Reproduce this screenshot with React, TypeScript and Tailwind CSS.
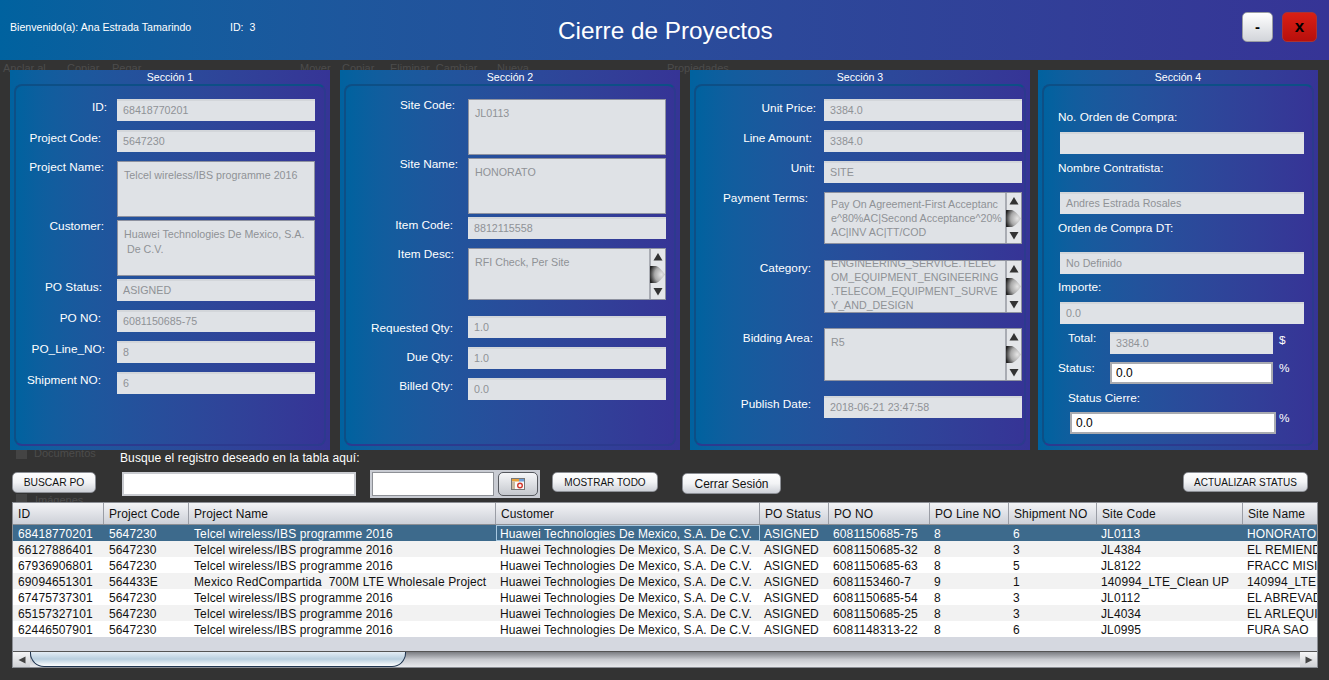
import React from "react";

const grad = "bg-gradient-to-r from-[#00629f] to-[#363496]";

function Spin() {
  return (
    <div className="w-[16px] shrink-0 self-stretch bg-[#e4e6e9] border-l-2 border-[#a9acb3] flex flex-col items-center justify-between py-[3px]">
      <svg className="shrink-0" width="10" height="9" viewBox="0 0 10 9"><path d="M5 1L9.5 8.5H0.5Z" fill="#333" /></svg>
      <svg className="shrink-0 -ml-[1px]" width="15" height="17" viewBox="0 0 15 17">
        <defs>
          <radialGradient id="bulb" cx="0.75" cy="0.5" r="0.8">
            <stop offset="0" stopColor="#e6e6e6" />
            <stop offset="0.55" stopColor="#a8a8a8" />
            <stop offset="1" stopColor="#222" />
          </radialGradient>
        </defs>
        <path d="M0 0H6C9 1 12 4 15 8.5C12 13 9 16 6 17H0Z" fill="url(#bulb)" />
      </svg>
      <svg className="shrink-0" width="10" height="9" viewBox="0 0 10 9"><path d="M5 8.5L9.5 1H0.5Z" fill="#333" /></svg>
    </div>
  );
}

function Box({ v, h = "h-[22px]", w = "w-[198px]", area = false, spin = false, white = false, textCls = "" }: { v?: string; h?: string; w?: string; area?: boolean; spin?: boolean; white?: boolean; textCls?: string }) {
  if (area) {
    return (
      <div className={`${h} ${w} shrink-0 flex overflow-hidden bg-[#dfe2e6] border border-[#8e92a0] text-[#8f9296] text-[10.7px] leading-[15px]`}>
        <div className={`flex-1 min-w-0 whitespace-pre overflow-hidden ${textCls || "pl-[6px] pt-[6px]"}`}>{v}</div>
        {spin && <Spin />}
      </div>
    );
  }
  return (
    <div className={`${h} ${w} shrink-0 flex items-center ${white ? "pl-[4px] bg-white border-2 border-[#a9abb0] text-black text-[12px]" : "pl-[6px] pb-[2px] bg-[#dfe2e6] border-t-2 border-[#d3d6da] text-[#8f9296] text-[10.7px]"}`}>
      {v}
    </div>
  );
}

function Row({ label, pos, cls, children }: { label: string; pos: string; cls: string; children: React.ReactNode }) {
  return (
    <div className={`flex ${cls}`}>
      <div className={`flex-1 text-right text-white text-[11.8px] leading-[16px] whitespace-nowrap ${pos}`}>{label}</div>
      {children}
    </div>
  );
}

function Panel({ title, w, children }: { title: string; w: string; children: React.ReactNode }) {
  return (
    <section className={`${w} h-[380px] ${grad} flex flex-col shrink-0 relative z-10`}>
      <h2 className="h-[14px] text-center text-white text-[10.6px] leading-[14px] font-normal">{title}</h2>
      <div className={`flex-1 mx-[4px] mb-[4px] rounded-[8px] border-2 border-[#0d4f86] border-b-[#2c3a8e] border-r-[#2c3a8e] ${grad}`}>
        {children}
      </div>
    </section>
  );
}

function Btn({ children, cls }: { children: React.ReactNode; cls: string }) {
  return (
    <button className={`${cls} shrink-0 rounded-[5px] border border-[#8d9096] bg-gradient-to-b from-[#ffffff] via-[#f2f3f5] to-[#ced1d8] text-[#111] flex items-center justify-center`}>
      {children}
    </button>
  );
}

const tel = "Telcel wireless/IBS programme 2016";
const hua = "Huawei Technologies De Mexico, S.A. De C.V.";
const rows = [
  ["68418770201", "5647230", tel, hua, "ASIGNED", "6081150685-75", "8", "6", "JL0113", "HONORATO"],
  ["66127886401", "5647230", tel, hua, "ASIGNED", "6081150685-32", "8", "3", "JL4384", "EL REMIEND"],
  ["67936906801", "5647230", tel, hua, "ASIGNED", "6081150685-63", "8", "5", "JL8122", "FRACC MISIO"],
  ["69094651301", "564433E", "Mexico RedCompartida  700M LTE Wholesale Project", hua, "ASIGNED", "6081153460-7", "9", "1", "140994_LTE_Clean UP", "140994_LTE"],
  ["67475737301", "5647230", tel, hua, "ASIGNED", "6081150685-54", "8", "3", "JL0112", "EL ABREVAD"],
  ["65157327101", "5647230", tel, hua, "ASIGNED", "6081150685-25", "8", "3", "JL4034", "EL ARLEQUI"],
  ["62446507901", "5647230", tel, hua, "ASIGNED", "6081148313-22", "8", "6", "JL0995", "FURA SAO"],
];
const heads = ["ID", "Project Code", "Project Name", "Customer", "PO Status", "PO NO", "PO Line NO", "Shipment NO", "Site Code", "Site Name"];
const cols = "grid grid-cols-[91px_85px_307px_264px_69px_101px_79px_88px_146px_74px]";

const ghosts = [
  ["Anclar al", "left-[3px] top-[60px]"],
  ["Copiar", "left-[67px] top-[60px]"],
  ["Pegar", "left-[112px] top-[60px]"],
  ["Mover", "left-[300px] top-[60px]"],
  ["Copiar", "left-[342px] top-[60px]"],
  ["Eliminar  Cambiar", "left-[390px] top-[60px]"],
  ["Nueva", "left-[497px] top-[60px]"],
  ["Propiedades", "left-[667px] top-[60px]"],
  ["Documentos", "left-[34px] top-[445px]"],
  ["Imágenes", "left-[35px] top-[492px]"],
];

export default function App() {
  return (
    <div className="w-[1329px] h-[680px] bg-[#333333] overflow-hidden relative font-['Liberation_Sans',Arial,sans-serif]">
      {ghosts.map(([t, p]) => (
        <span key={t + p} className={`absolute ${p} text-[11px] text-[#4c4c4c] whitespace-pre z-0`}>{t}</span>
      ))}
      <div className="absolute left-[16px] top-[447px] w-[11px] h-[12px] bg-[#444] z-0" />
      <div className="absolute left-[16px] top-[494px] w-[11px] h-[8px] bg-[#444] z-0" />

      <header className={`h-[60px] ${grad} flex items-start relative z-10`}>
        <span className="ml-[10px] mt-[20px] text-white text-[10.6px] leading-[14px] w-[220px] whitespace-nowrap">Bienvenido(a): Ana Estrada Tamarindo</span>
        <span className="mt-[20px] text-white text-[10.6px] leading-[14px] w-[328px] whitespace-pre">ID:  3</span>
        <h1 className="mt-[17px] text-white text-[24.3px] leading-[28px] font-normal w-[684px] whitespace-nowrap">Cierre de Proyectos</h1>
        <button className="mt-[12px] w-[31px] h-[30px] rounded-[5px] border border-[#9a9da3] bg-gradient-to-b from-white to-[#d2d5da] text-black font-bold text-[15px]">-</button>
        <button className="mt-[12px] ml-[9px] w-[35px] h-[30px] rounded-[5px] border border-[#a33] bg-gradient-to-b from-[#d91f14] to-[#b80f0c] text-black font-bold text-[17px]">x</button>
      </header>

      <main className="flex pl-[10px] pt-[10px] h-[390px]">
        <Panel title="Sección 1" w="w-[320px]">
          <div className="pt-[13px] pr-[9px]">
            <Row label="ID:" pos="pr-[10px]" cls=""><Box v="68418770201" /></Row>
            <Row label="Project Code:" pos="pr-[16px]" cls="mt-[9px]"><Box v="5647230" /></Row>
            <Row label="Project Name:" pos="pr-[13px] -mt-[2px]" cls="mt-[9px]"><Box v={tel} area h="h-[56px]" /></Row>
            <Row label="Customer:" pos="pr-[13px] -mt-[2px]" cls="mt-[3px]"><Box v={"Huawei Technologies De Mexico, S.A.\n De C.V."} area h="h-[56px]" /></Row>
            <Row label="PO Status:" pos="pr-[15px]" cls="mt-[3px]"><Box v="ASIGNED" /></Row>
            <Row label="PO NO:" pos="pr-[16px]" cls="mt-[9px]"><Box v="6081150685-75" /></Row>
            <Row label="PO_Line_NO:" pos="pr-[12px]" cls="mt-[9px]"><Box v="8" /></Row>
            <Row label="Shipment NO:" pos="pr-[16px]" cls="mt-[9px]"><Box v="6" /></Row>
          </div>
        </Panel>

        <div className="w-[10px] shrink-0" />

        <Panel title="Sección 2" w="w-[340px]">
          <div className="pt-[13px] pr-[8px]">
            <Row label="Site Code:" pos="pr-[13px] -mt-[2px]" cls=""><Box v="JL0113" area h="h-[56px]" /></Row>
            <Row label="Site Name:" pos="pr-[10px] -mt-[2px]" cls="mt-[3px]"><Box v="HONORATO" area h="h-[56px]" /></Row>
            <Row label="Item Code:" pos="pr-[15px]" cls="mt-[3px]"><Box v="8812115558" /></Row>
            <Row label="Item Desc:" pos="pr-[14px] -mt-[2px]" cls="mt-[9px]"><Box v="RFI Check, Per Site" area spin h="h-[52px]" /></Row>
            <Row label="Requested Qty:" pos="pr-[15px] pt-[4px]" cls="mt-[16px]"><Box v="1.0" /></Row>
            <Row label="Due Qty:" pos="pr-[15px] pt-[2px]" cls="mt-[9px]"><Box v="1.0" /></Row>
            <Row label="Billed Qty:" pos="pr-[15px]" cls="mt-[9px]"><Box v="0.0" /></Row>
          </div>
        </Panel>

        <div className="w-[10px] shrink-0" />

        <Panel title="Sección 3" w="w-[340px]">
          <div className="pt-[13px] pr-[2px]">
            <Row label="Unit Price:" pos="pr-[8px] pt-[1px]" cls=""><Box v="3384.0" /></Row>
            <Row label="Line Amount:" pos="pr-[12px]" cls="mt-[9px]"><Box v="3384.0" /></Row>
            <Row label="Unit:" pos="pr-[9px] -mt-[1px]" cls="mt-[9px]"><Box v="SITE" /></Row>
            <Row label="Payment Terms:" pos="pr-[16px] -mt-[2px]" cls="mt-[9px]"><Box v={"Pay On Agreement-First Acceptanc\ne^80%AC|Second Acceptance^20%\nAC|INV AC|TT/COD"} area spin h="h-[52px]" textCls="pl-[6px] pt-[4px] leading-[14px]" /></Row>
            <Row label="Category:" pos="pr-[13px]" cls="mt-[16px]"><Box v={"ENGINEERING_SERVICE.TELEC\nOM_EQUIPMENT_ENGINEERING\n.TELECOM_EQUIPMENT_SURVE\nY_AND_DESIGN"} area spin h="h-[53px]" textCls="pl-[6px] -mt-[5px] leading-[14px]" /></Row>
            <Row label="Bidding Area:" pos="pr-[11px] pt-[2px]" cls="mt-[15px]"><Box v="R5" area spin h="h-[53px]" /></Row>
            <Row label="Publish Date:" pos="pr-[13px]" cls="mt-[15px]"><Box v="2018-06-21 23:47:58" /></Row>
          </div>
        </Panel>

        <div className="w-[8px] shrink-0" />

        <Panel title="Sección 4" w="w-[280px]">
          <div className="pl-[14px] text-white text-[11.8px] leading-[16px]">
            <p className="pt-[23px]">No. Orden de Compra:</p>
            <div className="pl-[2px] mt-[7px]"><Box w="w-[244px]" /></div>
            <p className="mt-[6px]">Nombre Contratista:</p>
            <div className="pl-[2px] mt-[16px]"><Box v="Andres Estrada Rosales" w="w-[244px]" /></div>
            <p className="mt-[6px]">Orden de Compra DT:</p>
            <div className="pl-[2px] mt-[16px]"><Box v="No Definido" w="w-[244px]" /></div>
            <p className="mt-[5px]">Importe:</p>
            <div className="pl-[2px] mt-[7px]"><Box v="0.0" w="w-[244px]" /></div>
            <div className="flex mt-[8px] h-[22px]">
              <span className="w-[52px] pl-[10px] -mt-[2px]">Total:</span>
              <Box v="3384.0" w="w-[163px]" />
              <span className="ml-[6px]">$</span>
            </div>
            <div className="flex mt-[8px] h-[22px]">
              <span className="w-[52px] -mt-[2px]">Status:</span>
              <Box v="0.0" w="w-[163px]" white />
              <span className="ml-[6px] -mt-[2px]">%</span>
            </div>
            <p className="pl-[10px] mt-[6px]">Status Cierre:</p>
            <div className="flex mt-[6px] h-[22px] pl-[12px]">
              <Box v="0.0" w="w-[206px]" white />
              <span className="ml-[3px] -mt-[2px]">%</span>
            </div>
          </div>
        </Panel>
      </main>

      <div className="h-[20px] pl-[120px] pt-[1px] text-white text-[12px] tracking-[0.11px] leading-[14px] relative z-10">Busque el registro deseado en la tabla aquí:</div>

      <div className="h-[32px] flex items-start relative z-10">
        <Btn cls="ml-[12px] mt-[2px] w-[84px] h-[21px] text-[10.3px]">BUSCAR PO</Btn>
        <div className="ml-[26px] mt-[2px] w-[234px] h-[24px] bg-white border-2 border-[#c9cbd0]" />
        <div className="ml-[14px] w-[170px] h-[28px] bg-[#c9ccd3] flex items-center pl-[2px] gap-[4px]">
          <div className="w-[122px] h-[24px] bg-white border border-[#8d9096]" />
          <div className="w-[40px] h-[24px] rounded-[5px] border border-[#55585e] bg-gradient-to-b from-[#f6f7f9] to-[#c5c8ce] flex items-center justify-center">
            <svg width="14" height="12" viewBox="0 0 14 12">
              <rect x="0.5" y="0.5" width="13" height="11" fill="#fbfbfb" stroke="#777" />
              <rect x="1" y="1" width="7" height="2.5" fill="#e8a23c" />
              <rect x="8" y="1" width="5" height="2.5" fill="#6d9ed8" />
              <rect x="1" y="3.5" width="3" height="7.5" fill="#c9b9a0" />
              <circle cx="9" cy="7.5" r="2.3" fill="none" stroke="#d2382e" strokeWidth="1.4" />
            </svg>
          </div>
        </div>
        <Btn cls="ml-[12px] mt-[2px] w-[106px] h-[20px] text-[10px]">MOSTRAR TODO</Btn>
        <Btn cls="ml-[24px] mt-[3px] w-[99px] h-[21px] text-[12px]">Cerrar Sesión</Btn>
        <Btn cls="ml-[402px] mt-[2px] w-[125px] h-[20px] text-[10px]">ACTUALIZAR STATUS</Btn>
      </div>

      <div className="ml-[12px] w-[1306px] h-[166px] border border-[#8b8e94] bg-[#d5d8e0] flex flex-col overflow-hidden text-[12px] tracking-[0.12px] text-[#111] relative z-10">
        <div className={`${cols} h-[22px] shrink-0 bg-gradient-to-b from-[#f3f4f6] to-[#cdd0d8] border-b border-[#8b8e94]`}>
          {heads.map((h) => (
            <div key={h} className="pl-[5px] leading-[22px] border-r border-[#9a9da5] whitespace-nowrap overflow-hidden last:border-r-0">{h}</div>
          ))}
        </div>
        <div className="h-[112px] shrink-0">
          {rows.map((r, i) => (
            <div key={r[0]} className={`${cols} h-[16px] leading-[18px] ${i === 0 ? "bg-[#3d6a8c] text-white" : i % 2 ? "bg-[#f2f2f2]" : "bg-white"}`}>
              {r.map((c, j) => (
                <div key={j} className={`whitespace-pre overflow-hidden ${j < 3 ? "pl-[5px]" : "pl-[4px]"} ${i === 0 && j === 3 ? "border border-[#a8c8e0] !pl-[3px] leading-[16px]" : ""}`}>{c}</div>
              ))}
            </div>
          ))}
        </div>
        <div className="flex-1 border-b border-[#555]" />
        <div className="h-[15px] shrink-0 flex items-center bg-gradient-to-b from-[#7b7d82] via-[#c9cbd0] to-[#e8e9ec]">
          <div className="w-[17px] h-[15px] bg-gradient-to-b from-[#f5f5f6] to-[#cfd1d5] flex justify-center items-center">
            <svg width="8" height="8" viewBox="0 0 8 8"><path d="M0.5 4L7.5 0.5V7.5Z" fill="#444" /></svg>
          </div>
          <div className="w-[376px] h-[15px] rounded-b-[14px] border border-t-0 border-[#1f3550] bg-gradient-to-b from-[#e4edf5] via-[#b9cfdf] to-[#ffffff]" />
          <div className="flex-1" />
          <div className="w-[17px] h-[15px] bg-gradient-to-b from-[#f5f5f6] to-[#cfd1d5] flex justify-center items-center">
            <svg width="8" height="8" viewBox="0 0 8 8"><path d="M7.5 4L0.5 0.5V7.5Z" fill="#444" /></svg>
          </div>
        </div>
      </div>
    </div>
  );
}
